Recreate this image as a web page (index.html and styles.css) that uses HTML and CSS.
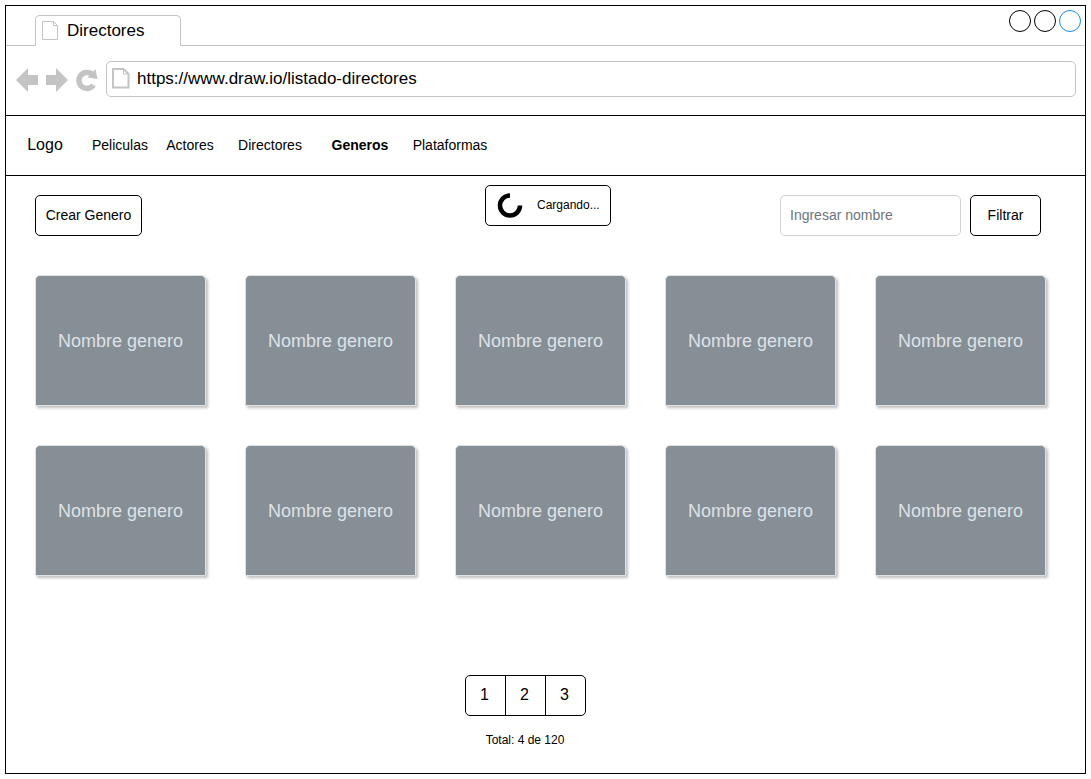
FILE: index.html
```html
<!DOCTYPE html>
<html lang="es">
<head>
<meta charset="utf-8">
<title>Directores</title>
<link rel="stylesheet" href="styles.css">
</head>
<body>
<div class="window">
  <header class="tab-bar">
    <div class="tab">
      <svg width="17" height="20" viewBox="0 0 17 20" fill="none" stroke="#c4c4c4"><path d="M.5 .5H11.500L15.500 4.500V18.500H.5ZM11.500 .5V4.500H15.500"/></svg>
      <span>Directores</span>
    </div>
    <div class="window-controls">
      <span class="circle"></span>
      <span class="circle"></span>
      <span class="circle circle-blue"></span>
    </div>
  </header>
  <div class="address-bar">
    <button class="browser-button" aria-label="Atrás"><svg width="22" height="24" viewBox="0 0 22 24" fill="#c4c4c4"><path d="M0 12L12 0V7H22V17H12V24Z"/></svg></button>
    <button class="browser-button" aria-label="Adelante"><svg width="22" height="24" viewBox="0 0 22 24" fill="#c4c4c4"><path d="M22 12L10 0V7H0V17H10V24Z"/></svg></button>
    <button class="browser-button" aria-label="Recargar"><svg width="22" height="24" viewBox="0 0 22 24"><path d="M16 6.200A8 8 0 1 0 17.500 17" fill="none" stroke="#c4c4c4" stroke-width="5.500"/><path d="M19.500 1L21.500 11L11.500 9.500Z" fill="#c4c4c4"/></svg></button>
    <label class="url-box">
      <svg width="18" height="21" viewBox="0 0 18 21" fill="none" stroke="#c4c4c4"><path stroke-width="2" d="M1 1H11.500L16.500 6V19.500H1Z"/><path d="M11.500 1V6H16.500"/></svg>
      <input class="url" type="text" aria-label="Dirección" value="https://www.draw.io/listado-directores">
    </label>
  </div>
  <nav class="nav">
    <a class="logo" href="#">Logo</a>
    <a class="link link-medium" href="#">Peliculas</a>
    <a class="link link-small" href="#">Actores</a>
    <a class="link link-large" href="#">Directores</a>
    <a class="link link-medium active" href="#">Generos</a>
    <a class="link link-large" href="#">Plataformas</a>
  </nav>
  <main class="content">
    <div class="toolbar">
      <button class="button create">Crear Genero</button>
      <div class="loader" role="status">
        <svg width="26" height="26" viewBox="0 0 26 26" fill="none" stroke="#000" stroke-width="4.500"><path d="M13 3.500A10 10 0 1 0 23 13.500"/></svg>
        <span>Cargando...</span>
      </div>
      <form class="filter">
        <input class="search" type="text" placeholder="Ingresar nombre" aria-label="Ingresar nombre">
        <button class="button submit" type="button">Filtrar</button>
      </form>
    </div>
    <div class="cards">
      <article class="card">Nombre genero</article>
      <article class="card">Nombre genero</article>
      <article class="card">Nombre genero</article>
      <article class="card">Nombre genero</article>
      <article class="card">Nombre genero</article>
      <article class="card">Nombre genero</article>
      <article class="card">Nombre genero</article>
      <article class="card">Nombre genero</article>
      <article class="card">Nombre genero</article>
      <article class="card">Nombre genero</article>
    </div>
    <footer class="footer">
      <div class="pages">
        <button class="page">1</button>
        <button class="page">2</button>
        <button class="page">3</button>
      </div>
      <p class="total">Total: 4 de 120</p>
    </footer>
  </main>
</div>
</body>
</html>
```

FILE: styles.css
```css
* {
  box-sizing: border-box;
}

body {
  margin: 0;
  padding: 5px;
  background: #fff;
  color: #000;
  font-family: "Liberation Sans", Arial, sans-serif;
  font-size: 14px;
}

button,
input {
  font: inherit;
  color: inherit;
}

a {
  color: inherit;
  text-decoration: none;
}

.window {
  display: flex;
  flex-direction: column;
  min-height: calc(100vh - 10px);
  border: 1px solid #000;
}

.tab-bar {
  display: flex;
  justify-content: space-between;
  height: 40px;
  padding: 0 4px 0 29px;
  border-bottom: 1px solid #c4c4c4;
}

.tab {
  display: flex;
  align-items: center;
  gap: 8px;
  height: 31px;
  min-width: 146px;
  margin-top: 9px;
  padding: 0 6px;
  border: 1px solid #c4c4c4;
  border-bottom: 0;
  border-radius: 5px 5px 0 0;
  background: #fff;
  font-size: 17px;
}

.window-controls {
  display: flex;
  gap: 3px;
  padding-top: 4px;
}

.circle {
  width: 22px;
  height: 22px;
  border: 1px solid #000;
  border-radius: 50%;
}

.circle-blue {
  border-color: #1e88e5;
}

.address-bar {
  display: flex;
  align-items: center;
  gap: 8px;
  height: 70px;
  padding: 0 9px 4px 10px;
  border-bottom: 1px solid #000;
}

.browser-button {
  display: flex;
  padding: 2px 0 0;
  border: 0;
  background: none;
}

.url-box {
  display: flex;
  flex: 1;
  align-items: center;
  gap: 7px;
  height: 36px;
  padding: 0 5px;
  border: 1px solid #c4c4c4;
  border-radius: 5px;
}

.url {
  flex: 1;
  padding: 0;
  border: 0;
  background: none;
  font-size: 17px;
}

.nav {
  display: flex;
  align-items: center;
  height: 60px;
  padding: 0 0 2px 4px;
  border-bottom: 1px solid #000;
}

.logo {
  width: 70px;
  text-align: center;
  font-size: 16px;
}

.link {
  text-align: center;
}

.link-small {
  width: 60px;
}

.link-medium {
  width: 80px;
}

.link-large {
  width: 100px;
}

.active {
  font-weight: bold;
}

.content {
  display: flex;
  flex: 1;
  flex-direction: column;
  padding: 9px 39px 25px 29px;
}

.toolbar {
  display: flex;
  align-items: flex-start;
  padding-right: 5px;
}

.button {
  height: 41px;
  padding: 0 0 2px;
  border: 1px solid #000;
  border-radius: 5px;
  background: #fff;
}

.create {
  width: 107px;
  margin-top: 10px;
}

.loader {
  display: flex;
  align-items: center;
  gap: 14px;
  width: 126px;
  height: 41px;
  margin-right: 169px;
  margin-left: auto;
  padding: 0 0 2px 11px;
  border: 1px solid #000;
  border-radius: 5px;
  background: #fff;
  font-size: 12px;
}

.filter {
  display: flex;
  gap: 9px;
  margin-top: 10px;
}

.search {
  width: 181px;
  height: 41px;
  padding: 0 9px 2px;
  border: 1px solid #ced4d4;
  border-radius: 5px;
}

.search::placeholder {
  color: #6c757d;
  opacity: 1;
}

.submit {
  width: 71px;
}

.cards {
  display: grid;
  grid-template-columns: repeat(5, 1fr);
  gap: 39px;
  margin-top: 39px;
}

.card {
  display: flex;
  align-items: center;
  justify-content: center;
  height: 131px;
  padding-top: 2px;
  border: 1px solid #dfe1e3;
  border-radius: 5px 5px 0 0;
  background: #868e96;
  box-shadow: 2px 2px 3px rgba(0, 0, 0, 0.25);
  color: #dee2e6;
  font-size: 18px;
}

.footer {
  display: flex;
  flex-direction: column;
  align-items: center;
  gap: 16px;
  margin-top: auto;
  padding-right: 31px;
}

.pages {
  display: flex;
  border: 1px solid #000;
  border-radius: 5px;
}

.page {
  width: 40px;
  height: 39px;
  padding: 0 1px 2px 0;
  border: 0;
  border-left: 1px solid #000;
  background: none;
  font-size: 16px;
}

.page:first-child {
  width: 39px;
  border-left: 0;
}

.total {
  margin: 0;
  font-size: 12px;
  line-height: 16px;
}
```
